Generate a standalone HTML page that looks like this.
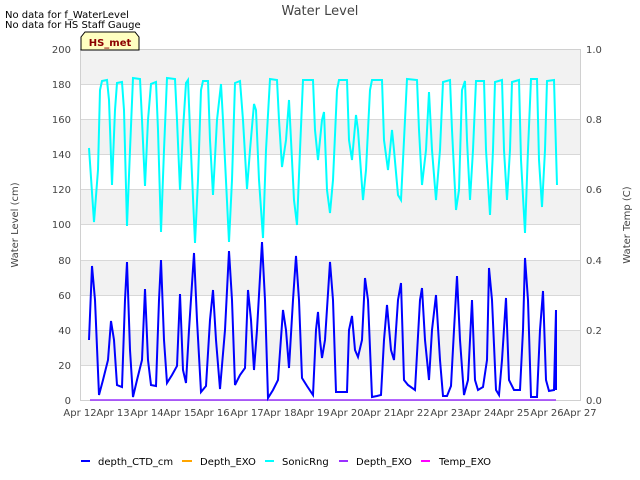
<!DOCTYPE html><html><head><style>body{margin:0;background:#fff;}svg{display:block;font-family:"DejaVu Sans","Liberation Sans",sans-serif;}</style></head><body>
<svg width="640" height="480" viewBox="0 0 640 480">
<rect x="80" y="49" width="500" height="351" fill="#fff"/>
<g fill="#f2f2f2"><rect x="80" y="49" width="500" height="35"/><rect x="80" y="119" width="500" height="35"/><rect x="80" y="189" width="500" height="35"/><rect x="80" y="260" width="500" height="35"/><rect x="80" y="330" width="500" height="35"/></g>
<g stroke="#d8d8d8" stroke-width="1"><line x1="80" y1="84.5" x2="580" y2="84.5"/><line x1="80" y1="119.5" x2="580" y2="119.5"/><line x1="80" y1="154.5" x2="580" y2="154.5"/><line x1="80" y1="189.5" x2="580" y2="189.5"/><line x1="80" y1="224.5" x2="580" y2="224.5"/><line x1="80" y1="260.5" x2="580" y2="260.5"/><line x1="80" y1="295.5" x2="580" y2="295.5"/><line x1="80" y1="330.5" x2="580" y2="330.5"/><line x1="80" y1="365.5" x2="580" y2="365.5"/></g>
<rect x="80.5" y="49.5" width="500" height="351" fill="none" stroke="#d0d0d0"/>
<polyline fill="none" stroke="#00ffff" stroke-width="2" points="89,148 94,222 98,170 100,90 102,81 107,80 109,100 112,185 115,110 117,83 122,82 124,110 127,226 130,150 133,78 140,79 142,120 145,186 148,120 151,84 156,82 158,130 161,232 164,150 167,78 175,79 177,120 180,190 183,130 186,83 188,80 190,130 195,243 198,180 201,90 203,81 208,81 210,140 213,195 217,120 221,84 223,120 229,242 232,180 235,83 240,81 243,120 247,189 250,150 254,104 256,110 259,180 263,238 266,150 270,79 277,80 279,120 282,167 286,140 289,100 291,140 294,200 297,225 300,150 303,80 313,80 315,130 318,160 322,120 324,112 327,190 330,213 333,180 337,90 339,80 347,80 349,140 352,160 356,115 358,130 363,200 366,170 370,90 372,80 382,80 384,140 388,170 392,130 394,150 398,195 401,200 404,140 407,79 417,80 419,130 422,185 426,150 429,92 432,150 436,200 440,150 443,82 450,80 452,130 456,210 459,190 462,90 465,81 467,140 470,200 473,150 476,81 484,81 486,150 490,215 493,150 495,82 502,80 504,150 507,200 510,150 512,82 519,80 521,160 525,233 528,150 531,79 537,79 539,160 542,207 545,150 547,81 554,80 556,150 557,185"/>
<line x1="90" y1="400" x2="556" y2="400" stroke="#9b30ff" stroke-width="1.5"/>
<polyline fill="none" stroke="#0000ff" stroke-width="2" points="89,340 92,266 95,300 99,395 103,380 108,360 111,321 114,340 117,385 122,387 125,300 127,262 130,350 133,397 137,380 142,360 145,289 148,360 151,385 156,386 159,300 161,260 164,340 167,383 172,375 177,366 180,294 183,370 186,383 189,330 194,253 197,320 201,392 206,386 210,320 213,290 216,340 220,389 225,330 229,251 232,300 235,385 240,375 245,368 248,290 251,320 254,370 257,330 262,242 265,300 268,398 273,390 278,380 283,310 286,330 289,368 293,300 296,256 299,300 302,378 307,386 313,395 316,330 318,312 320,340 322,358 325,340 330,262 333,300 336,392 341,392 347,392 349,330 352,316 355,350 358,357 362,340 365,278 368,300 372,397 377,396 381,395 384,340 387,305 391,350 394,360 398,300 401,283 404,380 408,385 415,390 420,300 422,288 425,340 429,380 432,330 436,295 440,360 443,396 447,396 451,386 454,330 457,276 460,340 464,395 468,380 472,300 475,380 478,390 483,387 487,360 489,268 492,300 496,390 499,395 502,360 506,298 509,380 514,390 520,390 523,330 525,258 528,300 531,397 537,397 540,330 543,291 546,380 549,391 554,390 556,310 556,390"/>
<g font-size="10" fill="#444" text-anchor="end"><text x="71" y="53">200</text><text x="71" y="88">180</text><text x="71" y="123">160</text><text x="71" y="158">140</text><text x="71" y="193">120</text><text x="71" y="228">100</text><text x="71" y="264">80</text><text x="71" y="299">60</text><text x="71" y="334">40</text><text x="71" y="369">20</text><text x="71" y="404">0</text></g>
<g font-size="10" fill="#444"><text x="586" y="53">1.0</text><text x="586" y="123">0.8</text><text x="586" y="193">0.6</text><text x="586" y="264">0.4</text><text x="586" y="334">0.2</text><text x="586" y="404">0.0</text></g>
<g font-size="10" fill="#444" text-anchor="middle"><text x="80" y="416">Apr 12</text><text x="113" y="416">Apr 13</text><text x="147" y="416">Apr 14</text><text x="180" y="416">Apr 15</text><text x="213" y="416">Apr 16</text><text x="247" y="416">Apr 17</text><text x="280" y="416">Apr 18</text><text x="313" y="416">Apr 19</text><text x="347" y="416">Apr 20</text><text x="380" y="416">Apr 21</text><text x="413" y="416">Apr 22</text><text x="447" y="416">Apr 23</text><text x="480" y="416">Apr 24</text><text x="513" y="416">Apr 25</text><text x="547" y="416">Apr 26</text><text x="580" y="416">Apr 27</text></g>
<text x="18" y="225" font-size="10" fill="#444" text-anchor="middle" transform="rotate(-90 18 225)">Water Level (cm)</text>
<text x="630" y="225" font-size="10" fill="#444" text-anchor="middle" transform="rotate(-90 630 225)">Water Temp (C)</text>
<text x="320" y="15" font-size="13" fill="#444" text-anchor="middle">Water Level</text>
<text x="5" y="18" font-size="10" fill="#000">No data for f_WaterLevel</text>
<text x="5" y="28" font-size="10" fill="#000">No data for HS Staff Gauge</text>
<path d="M81,50 L81,37 L85,32 L135,32 L139,37 L139,50 Z" fill="#ffffc0" stroke="#000" stroke-width="1"/>
<text x="110" y="46" font-size="10" font-weight="bold" fill="#8b0000" text-anchor="middle">HS_met</text>
<g font-size="10" fill="#000"><line x1="81" y1="461" x2="90" y2="461" stroke="#0000ff" stroke-width="2"/><text x="98" y="465">depth_CTD_cm</text>
<line x1="182" y1="461" x2="192" y2="461" stroke="#ffa500" stroke-width="2"/><text x="200" y="465">Depth_EXO</text>
<line x1="265" y1="461" x2="274" y2="461" stroke="#00ffff" stroke-width="2"/><text x="282" y="465">SonicRng</text>
<line x1="339" y1="461" x2="348" y2="461" stroke="#9b30ff" stroke-width="2"/><text x="356" y="465">Depth_EXO</text>
<line x1="421" y1="461" x2="430" y2="461" stroke="#ff00ff" stroke-width="2"/><text x="439" y="465">Temp_EXO</text></g>
</svg></body></html>
